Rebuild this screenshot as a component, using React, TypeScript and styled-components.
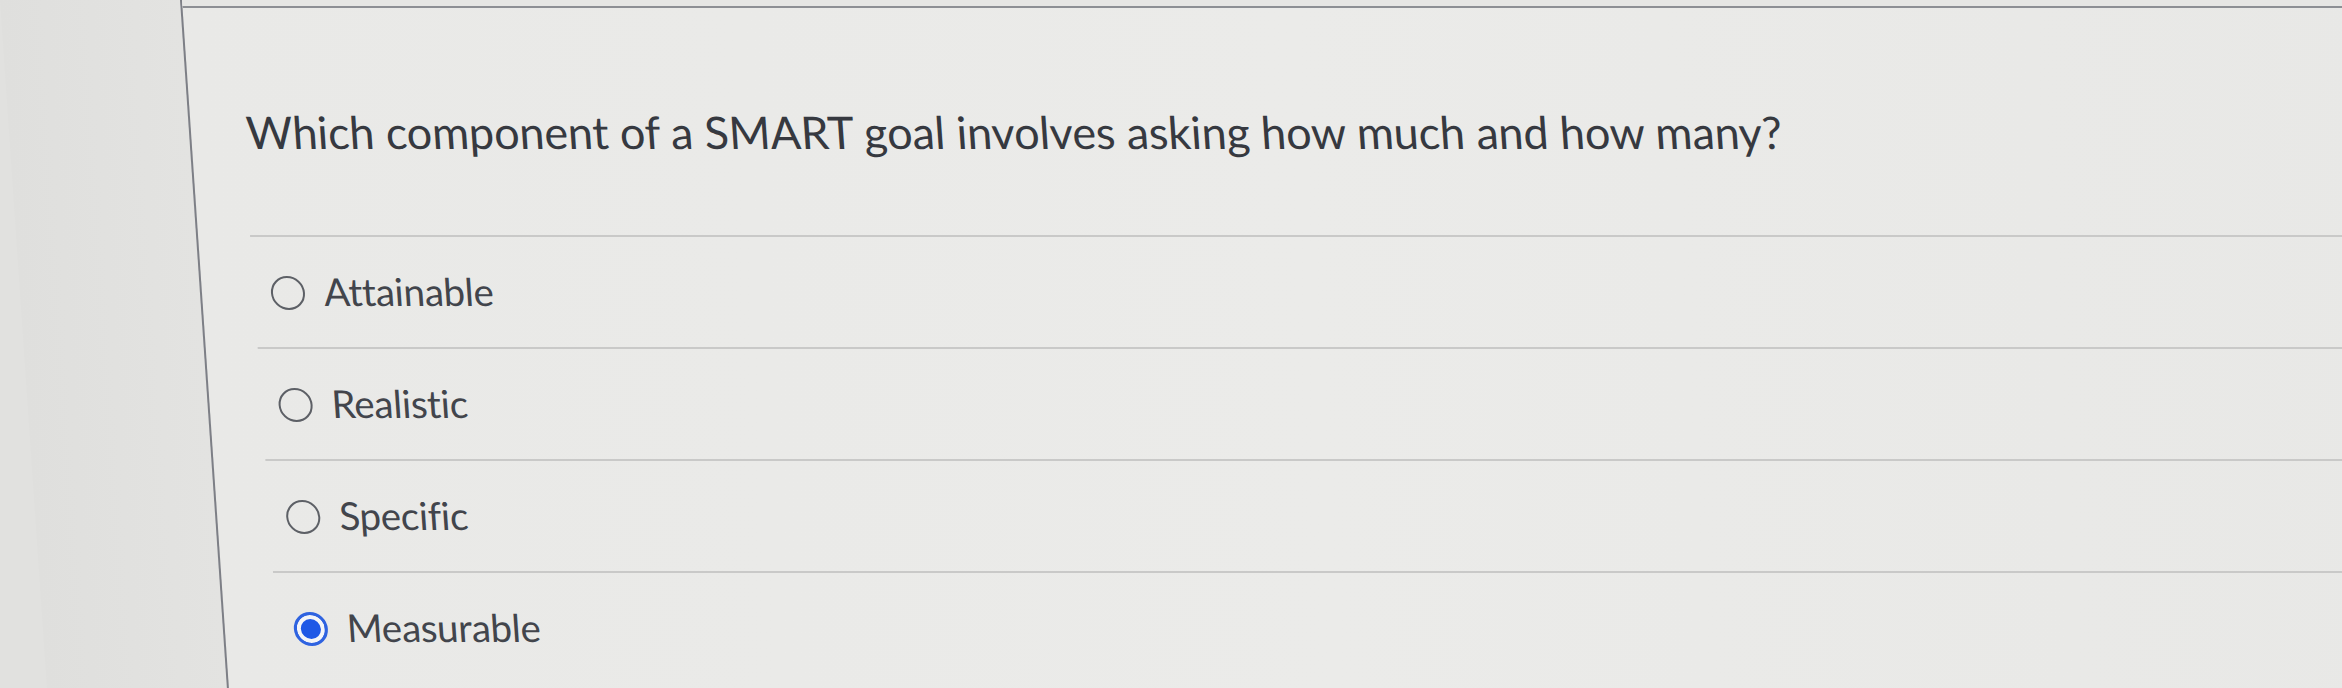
import React from "react";
import styled, { createGlobalStyle } from "styled-components";

const Global = createGlobalStyle`
  html, body {
    margin: 0;
    padding: 0;
    background: #e1e1df;
    overflow: hidden;
  }
  #root { height: 688px; }
`;

const Stage = styled.div`
  width: 2342px;
  height: 688px;
  overflow: hidden;
  background: #e1e1df;
`;

const Skewed = styled.div`
  display: flex;
  height: 760px;
  width: 2400px;
  transform: skewX(3.9deg);
  transform-origin: 0 0;
`;

const SideStrip = styled.div`
  width: 180px;
  flex: none;
  background: linear-gradient(90deg, #dfdfdd 0%, #e3e3e1 100%);
`;

const Panel = styled.div`
  flex: 1;
  display: flex;
  flex-direction: column;
  background: linear-gradient(90deg, #e9e9e7 0%, #ebebe9 50%, #e8e8e6 100%);
  border-left: 2px solid #7d7f86;
`;

const TopBar = styled.div`
  height: 6px;
  background: #e6e6e4;
  border-bottom: 2px solid #8d8f94;
`;

const Question = styled.h1`
  margin: 96px 0 0 55px;
  font-family: Lato, "Open Sans", sans-serif;
  font-weight: 400;
  font-size: 45px;
  line-height: 56px;
  color: #363940;
  letter-spacing: -0.15px;
`;

const OptionList = styled.div`
  margin: 75px 0 0 52px;
  display: flex;
  flex-direction: column;
`;

const OptionRow = styled.label`
  display: flex;
  align-items: center;
  gap: 19px;
  height: 112px;
  box-sizing: border-box;
  padding: 0 0 2px 17px;
  border-top: 2px solid #c9c9c8;
  font-family: Lato, "Open Sans", sans-serif;
  font-size: 38.5px;
  color: #42454c;
  letter-spacing: -0.3px;
`;

const Radio = styled.span<{ $checked?: boolean }>`
  width: 34px;
  height: 34px;
  box-sizing: border-box;
  flex: none;
  border-radius: 50%;
  border: ${(p) => (p.$checked ? "3px solid #2f63e0" : "2.5px solid #5d6066")};
  background: ${(p) => (p.$checked ? "#1f58e6" : "transparent")};
  box-shadow: ${(p) => (p.$checked ? "inset 0 0 0 4px #f4f5f8" : "none")};
  margin-top: 4px;
`;

const options = [
  { label: "Attainable", checked: false },
  { label: "Realistic", checked: false },
  { label: "Specific", checked: false },
  { label: "Measurable", checked: true },
];

export default function App() {
  return (
    <Stage>
      <Global />
      <Skewed>
        <SideStrip />
        <Panel>
          <TopBar />
          <Question>
            Which component of a SMART goal involves asking how much and how many?
          </Question>
          <OptionList>
            {options.map((o) => (
              <OptionRow key={o.label}>
                <Radio $checked={o.checked} />
                {o.label}
              </OptionRow>
            ))}
          </OptionList>
        </Panel>
      </Skewed>
    </Stage>
  );
}
